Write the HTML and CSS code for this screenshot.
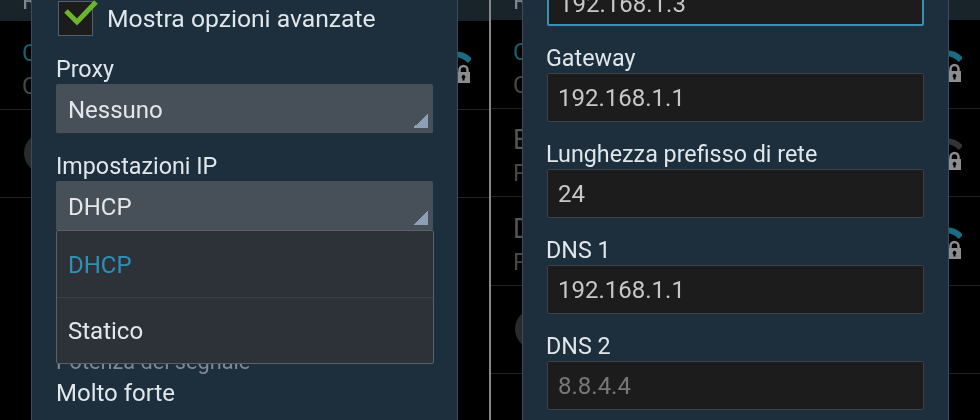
FILE: index.html
```html
<!DOCTYPE html>
<html lang="it">
<head>
    <title>Wi-Fi</title>
    <link rel="stylesheet" href="styles.css">
</head>
<body>
  <div class="screens">

    <div class="phone phone-left">
      <div class="top-bar"><span class="top-text">Reti</span></div>
      <div class="wifi-row">
        <div class="row-text">
          <p class="row-title row-title-on">Casa</p>
          <p class="row-sub">Connesso</p>
        </div>
        <svg class="wifi-icon" viewBox="0 0 26 36">
          <path class="wifi-on" d="M4 8 Q17 5 25 14"/>
          <path class="lock" d="M14.5 26 V23 A4 4 0 0 1 22.5 23 V26"/>
          <path class="lock-body" d="M12 25 H25 V36 H12 Z"/>
          <path class="lock-hole" d="M17.5 33.5 H19.5 V31.5 A1.9 1.9 0 1 0 17.5 31.5 Z"/>
        </svg>
      </div>
      <div class="wifi-row">
        <div class="row-circle"></div>
      </div>

      <div class="dialog">
        <div class="dialog-body dialog-body-left">
          <div class="check-row">
            <div class="checkbox">
              <svg class="check-icon" viewBox="0 0 38 30">
                <path d="M5 12 L16 23 L35 3"/>
              </svg>
            </div>
            <span>Mostra opzioni avanzate</span>
          </div>

          <div class="field">
            <p class="field-label">Proxy</p>
            <div class="select">Nessuno<span class="select-arrow"></span></div>
          </div>

          <div class="field">
            <p class="field-label">Impostazioni IP</p>
            <div class="select">DHCP<span class="select-arrow"></span></div>
          </div>

          <p class="info-label">Potenza del segnale</p>
          <p class="info-value">Molto forte</p>
        </div>

        <div class="dropdown">
          <div class="dropdown-item dropdown-item-active">DHCP</div>
          <div class="dropdown-item">Statico</div>
        </div>
      </div>
    </div>

    <div class="phone phone-right">
      <div class="top-bar"><span class="top-text">Reti</span></div>
      <div class="wifi-row">
        <div class="row-text">
          <p class="row-title row-title-on">Casa</p>
          <p class="row-sub">Connesso</p>
        </div>
        <svg class="wifi-icon" viewBox="0 0 26 36">
          <path class="wifi-on" d="M4 8 Q17 5 25 14"/>
          <path class="lock" d="M14.5 26 V23 A4 4 0 0 1 22.5 23 V26"/>
          <path class="lock-body" d="M12 25 H25 V36 H12 Z"/>
          <path class="lock-hole" d="M17.5 33.5 H19.5 V31.5 A1.9 1.9 0 1 0 17.5 31.5 Z"/>
        </svg>
      </div>
      <div class="wifi-row">
        <div class="row-text">
          <p class="row-title">Edimax</p>
          <p class="row-sub">Protetta</p>
        </div>
        <svg class="wifi-icon" viewBox="0 0 26 36">
          <path class="wifi-off" d="M4 8 Q17 5 25 14"/>
          <path class="lock" d="M14.5 26 V23 A4 4 0 0 1 22.5 23 V26"/>
          <path class="lock-body" d="M12 25 H25 V36 H12 Z"/>
          <path class="lock-hole" d="M17.5 33.5 H19.5 V31.5 A1.9 1.9 0 1 0 17.5 31.5 Z"/>
        </svg>
      </div>
      <div class="wifi-row">
        <div class="row-text">
          <p class="row-title">D-Link</p>
          <p class="row-sub">Protetta</p>
        </div>
        <svg class="wifi-icon" viewBox="0 0 26 36">
          <path class="wifi-on" d="M4 8 Q17 5 25 14"/>
          <path class="lock" d="M14.5 26 V23 A4 4 0 0 1 22.5 23 V26"/>
          <path class="lock-body" d="M12 25 H25 V36 H12 Z"/>
          <path class="lock-hole" d="M17.5 33.5 H19.5 V31.5 A1.9 1.9 0 1 0 17.5 31.5 Z"/>
        </svg>
      </div>
      <div class="wifi-row">
        <div class="row-circle"></div>
      </div>

      <div class="dialog">
        <div class="dialog-body dialog-body-right">
          <div class="field">
            <div class="input input-focused">192.168.1.3</div>
          </div>
          <div class="field">
            <p class="field-label">Gateway</p>
            <div class="input">192.168.1.1</div>
          </div>
          <div class="field">
            <p class="field-label">Lunghezza prefisso di rete</p>
            <div class="input">24</div>
          </div>
          <div class="field">
            <p class="field-label">DNS 1</p>
            <div class="input">192.168.1.1</div>
          </div>
          <div class="field">
            <p class="field-label">DNS 2</p>
            <div class="input input-hint">8.8.4.4</div>
          </div>
        </div>
      </div>
    </div>

  </div>
</body>
</html>
```

FILE: styles.css
```css
* {
  box-sizing: border-box;
}

body {
  margin: 0;
  background-color: black;
  font-family: Roboto, "Liberation Sans", sans-serif;
  font-size: 24px;
}

p {
  margin: 0;
}

.screens {
  display: flex;
  height: 420px;
  overflow: hidden;
  filter: blur(0.4px);
}

.phone {
  position: relative;
  width: 489px;
  height: 420px;
  overflow: hidden;
  background-color: black;
}

.phone-right {
  width: 491px;
  border-left: 2px solid rgb(136, 136, 136);
}

/* list behind the dialog */
.top-bar {
  height: 21px;
  padding-left: 22px;
  overflow: hidden;
  background-color: rgb(24, 35, 42);
}

.phone-right .top-bar {
  height: 20px;
}

.top-text {
  display: block;
  margin-top: -13px;
  color: rgb(125, 135, 140);
}

.wifi-row {
  display: flex;
  align-items: center;
  justify-content: space-between;
  height: 88.5px;
  padding: 0 18px 0 22px;
  border-bottom: 1px solid rgb(34, 34, 34);
}

.row-text {
  margin-top: 8px;
}

.row-title {
  font-size: 27px;
  line-height: 34px;
  color: rgb(85, 85, 85);
}

.row-title-on {
  font-size: 24px;
  color: rgb(24, 95, 110);
}

.row-sub {
  line-height: 32px;
  color: rgb(70, 70, 70);
}

.row-circle {
  width: 40px;
  height: 40px;
  border-radius: 20px;
  margin-left: 2px;
  background-color: rgb(42, 42, 42);
}

.wifi-icon {
  width: 26px;
  height: 36px;
  fill: none;
}

.wifi-on,
.wifi-off {
  stroke-width: 6;
}

.wifi-on {
  stroke: rgb(26, 108, 130);
}

.wifi-off {
  stroke: rgb(52, 52, 52);
}

.lock {
  stroke: rgb(140, 140, 140);
  stroke-width: 2.5;
}

.lock-body {
  fill: rgb(140, 140, 140);
}

.lock-hole {
  fill: black;
}

/* dialog */
.dialog {
  position: absolute;
  top: 0;
  bottom: 0;
  left: 31px;
  width: 427px;
  padding: 0 24px;
  overflow: hidden;
  background-color: rgb(29, 46, 61);
  border-left: 1px solid rgb(60, 76, 90);
  border-right: 1px solid rgb(60, 76, 90);
  color: rgb(224, 231, 235);
}

.dialog-body-left {
  padding-top: 1px;
}

.dialog-body-right {
  margin-top: -23px;
}

.dialog-body-right .field-label {
  margin-left: -1px;
}

.check-row {
  display: flex;
  align-items: center;
  gap: 14px;
  margin-bottom: 19px;
  padding-left: 2px;
  font-size: 24.7px;
}

.checkbox {
  position: relative;
  width: 35px;
  height: 35px;
  background-color: rgb(28, 28, 28);
  border: 1px solid rgb(85, 96, 106);
}

.check-icon {
  position: absolute;
  top: -3px;
  left: 2px;
  width: 38px;
  height: 30px;
  fill: none;
  stroke: rgb(108, 181, 45);
  stroke-width: 5;
}

.field {
  margin-bottom: 18px;
}

.field-label {
  height: 28px;
  margin-bottom: 1px;
  font-size: 23.3px;
  line-height: 28px;
}

.select {
  position: relative;
  display: flex;
  align-items: center;
  height: 50px;
  padding: 3px 0 0 12px;
  border-radius: 2px;
  background-color: rgb(71, 79, 89);
  border-bottom: 1px solid rgb(40, 50, 60);
  color: rgb(227, 231, 234);
}

.select-arrow {
  position: absolute;
  right: 5px;
  bottom: 5px;
  width: 15px;
  height: 15px;
  background: linear-gradient(to bottom right, transparent 50%, rgb(140, 159, 181) 50%);
}

.input {
  display: flex;
  align-items: center;
  height: 49px;
  padding: 1px 0 0 10px;
  background-color: rgb(28, 28, 28);
  border: 1px solid rgb(58, 66, 72);
  border-radius: 2px;
  color: rgb(200, 200, 200);
}

.input-focused {
  padding-top: 5px;
  border: 2px solid rgb(58, 143, 181);
}

.input-hint {
  color: rgb(119, 119, 119);
}

.info-label {
  margin-top: 117px;
  height: 28px;
  font-size: 21.7px;
  line-height: 28px;
  color: rgb(127, 138, 148);
}

.info-value {
  margin-top: 3px;
  line-height: 28px;
}

.dropdown {
  position: absolute;
  top: 230px;
  left: 24px;
  width: 378px;
  background-color: rgb(44, 50, 56);
  border: 1px solid rgb(90, 97, 104);
  border-radius: 2px;
}

.dropdown-item {
  display: flex;
  align-items: center;
  height: 66px;
  padding: 1px 0 0 11px;
  color: rgb(227, 231, 234);
}

.dropdown-item + .dropdown-item {
  border-top: 1px solid rgb(58, 64, 70);
}

.dropdown-item-active {
  color: rgb(47, 143, 181);
}
```
